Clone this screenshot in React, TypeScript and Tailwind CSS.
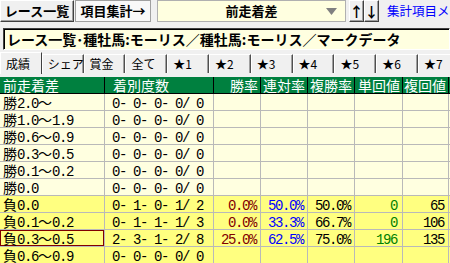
import React from "react";

const JP = "font-['Noto_Sans_CJK_JP',sans-serif]";
const ASCII_RE = /([\x20-\x7e]+)/;

function Mix({ s }: { s: string }) {
  const parts = s.split(ASCII_RE);
  return (
    <>
      {parts.map((p, i) =>
        p && /^[\x20-\x7e]+$/.test(p) ? (
          <span
            key={i}
            className="font-['Liberation_Mono',monospace] text-[14px] tracking-[-1.4px] whitespace-pre"
          >
            {p}
          </span>
        ) : (
          <span key={i}>{p}</span>
        )
      )}
    </>
  );
}

const TABS = ["成績", "シェア", "賞金", "全て", "★1", "★2", "★3", "★4", "★5", "★6", "★7"];

const HEADERS = ["前走着差", "着別度数", "勝率", "連対率", "複勝率", "単回値", "複回値", ""];
const WIDTHS = ["w-[105px]", "w-[109px]", "w-[47px]", "w-[47px]", "w-[47px]", "w-[48px]", "w-[46px]", "flex-1"];

interface Row {
  label: string;
  counts: string;
  win?: string;
  place2?: string;
  place3?: string;
  tan?: string;
  fuku?: string;
  lose?: boolean;
  selected?: boolean;
}

const ROWS: Row[] = [
  { label: "勝2.0〜", counts: "0- 0- 0- 0/ 0" },
  { label: "勝1.0〜1.9", counts: "0- 0- 0- 0/ 0" },
  { label: "勝0.6〜0.9", counts: "0- 0- 0- 0/ 0" },
  { label: "勝0.3〜0.5", counts: "0- 0- 0- 0/ 0" },
  { label: "勝0.1〜0.2", counts: "0- 0- 0- 0/ 0" },
  { label: "勝0.0", counts: "0- 0- 0- 0/ 0" },
  { label: "負0.0", counts: "0- 1- 0- 1/ 2", win: "0.0%", place2: "50.0%", place3: "50.0%", tan: "0", fuku: "65", lose: true },
  { label: "負0.1〜0.2", counts: "0- 1- 1- 1/ 3", win: "0.0%", place2: "33.3%", place3: "66.7%", tan: "0", fuku: "106", lose: true },
  { label: "負0.3〜0.5", counts: "2- 3- 1- 2/ 8", win: "25.0%", place2: "62.5%", place3: "75.0%", tan: "196", fuku: "135", lose: true, selected: true },
  { label: "負0.6〜0.9", counts: "0- 0- 0- 0/ 0", lose: true },
];

const raised =
  "border border-t-white border-l-white border-r-[#404040] border-b-[#404040] shadow-[inset_-1px_-1px_0_#a0a0a0]";

export default function App() {
  return (
    <div className={`w-[450px] h-[263px] overflow-hidden bg-[#f0f0f0] text-black ${JP}`}>
      {/* toolbar */}
      <div className="flex h-[22px] items-stretch">
        <div className={`w-[74px] flex items-center justify-center text-[13px] font-bold ${raised}`}>
          レース一覧
        </div>
        <div className="ml-[1px] w-[76px] flex items-center justify-center text-[13px] font-bold border border-[#a0a0a0] bg-[#f8f8f8]">
          項目集計→
        </div>
        <div className="ml-[6px] w-[189px] relative flex items-center justify-center text-[13px] font-bold border border-[#b0b0b0] bg-[#ffffe0]">
          前走着差
          <svg className="absolute right-[8px] top-[7px]" width="11" height="7" viewBox="0 0 11 7">
            <polygon points="0,0 11,0 5.5,7" fill="#808080" />
          </svg>
        </div>
        <div className={`ml-[3px] w-[15px] flex items-center justify-center text-[14px] font-bold ${raised}`}>↑</div>
        <div className={`w-[15px] flex items-center justify-center text-[14px] font-bold ${raised}`}>↓</div>
        <div className="ml-[8px] flex-1 overflow-hidden whitespace-nowrap flex items-center text-[12.5px] text-[#0000ff]">
          集計項目メニュー
        </div>
      </div>

      {/* title */}
      <div className="mt-[6px] ml-[3px] h-[22px] flex items-center pl-[3px] whitespace-nowrap overflow-hidden text-[14px] font-bold bg-[#ffffe0] border border-t-[#404040] border-l-[#404040] border-b-white border-r-white shadow-[inset_1px_1px_0_#000]">
        レース一覧･種牡馬:モーリス／種牡馬:モーリス／マークデータ
      </div>

      {/* tabs */}
      <div className="mt-[2px] h-[22px] flex items-end">
        {TABS.map((t, i) =>
          i === 0 ? (
            <div
              key={t}
              className="w-[41.8px] h-[22px] shrink-0 pl-[5px] flex items-center text-[12px] border-l border-t border-r border-l-white border-t-white border-r-[#404040] bg-[#f0f0f0]"
            >
              {t}
            </div>
          ) : (
            <div
              key={t}
              className="w-[41.8px] h-[19px] mb-[1px] shrink-0 pl-[5px] flex items-center text-[12px] whitespace-nowrap border-l border-t border-r border-l-white border-t-white border-r-[#505050] shadow-[inset_-1px_0_0_#a0a0a0]"
            >
              {t}
            </div>
          )
        )}
      </div>

      {/* table */}
      <div className="mt-[3px] text-[14px] leading-[16px]">
        <div className="flex h-[17px] bg-[#00803f] text-white border-b border-black">
          {HEADERS.map((h, i) => (
            <div
              key={i}
              className={`${WIDTHS[i]} shrink-0 border-r border-black whitespace-nowrap overflow-hidden ${
                i < 2 ? (i === 0 ? "pl-[3px]" : "pl-[8px]") : "text-right pr-[2px]"
              }`}
            >
              {h}
            </div>
          ))}
        </div>
        {ROWS.map((r) => (
          <div
            key={r.label}
            className={`flex h-[17px] ${r.lose ? "bg-[#ffff80]" : "bg-[#ffffe0]"}`}
          >
            <div
              className={`${WIDTHS[0]} shrink-0 pl-[3px] border-r border-b border-[#b9b9b9] whitespace-nowrap ${
                r.selected ? "shadow-[inset_0_0_0_1px_#800000]" : ""
              }`}
            >
              <Mix s={r.label} />
            </div>
            <div className={`${WIDTHS[1]} shrink-0 pl-[7px] border-r border-b border-[#b9b9b9] whitespace-nowrap`}>
              <Mix s={r.counts} />
            </div>
            <div className={`${WIDTHS[2]} shrink-0 pr-[4px] text-right text-[#800000] border-r border-b border-[#b9b9b9]`}>
              <Mix s={r.win ?? ""} />
            </div>
            <div className={`${WIDTHS[3]} shrink-0 pr-[4px] text-right text-[#0000ff] border-r border-b border-[#b9b9b9]`}>
              <Mix s={r.place2 ?? ""} />
            </div>
            <div className={`${WIDTHS[4]} shrink-0 pr-[4px] text-right border-r border-b border-[#b9b9b9]`}>
              <Mix s={r.place3 ?? ""} />
            </div>
            <div className={`${WIDTHS[5]} shrink-0 pr-[5px] text-right text-[#008000] border-r border-b border-[#b9b9b9]`}>
              <Mix s={r.tan ?? ""} />
            </div>
            <div className={`${WIDTHS[6]} shrink-0 pr-[4px] text-right border-r border-b border-[#b9b9b9]`}>
              <Mix s={r.fuku ?? ""} />
            </div>
            <div className="flex-1 border-b border-[#b9b9b9]" />
          </div>
        ))}
      </div>
    </div>
  );
}
